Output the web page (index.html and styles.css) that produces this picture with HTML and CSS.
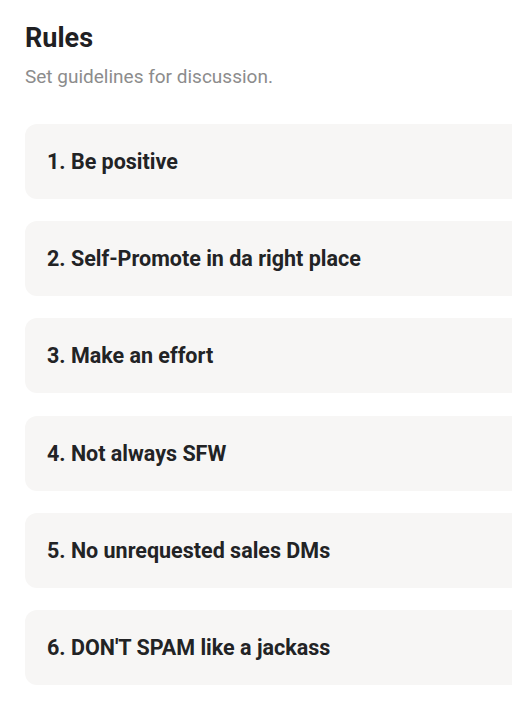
FILE: index.html
```html
<!DOCTYPE html>
<html>
<head>
<meta charset="utf-8">
<link rel="stylesheet" href="styles.css">
</head>
<body>
<div class="page">
  <h1 class="title">Rules</h1>
  <p class="subtitle">Set guidelines for discussion.</p>
  <div class="rules">
    <div class="rule">1. Be positive</div>
    <div class="rule">2. Self-Promote in da right place</div>
    <div class="rule">3. Make an effort</div>
    <div class="rule">4. Not always SFW</div>
    <div class="rule">5. No unrequested sales DMs</div>
    <div class="rule">6. DON'T SPAM like a jackass</div>
  </div>
</div>
</body>
</html>
```
FILE: styles.css
```css
html, body {
  margin: 0;
  padding: 0;
  background: #ffffff;
  overflow: hidden;
}
body {
  font-family: Roboto, "Liberation Sans", sans-serif;
  color: #222325;
}
.page {
  padding: 22px 0 0 25px;
  width: 540px;
}
.title {
  margin: 0;
  font-size: 27px;
  line-height: 32px;
  font-weight: 700;
  color: #1f2023;
}
.subtitle {
  margin: 12px 0 0;
  font-size: 19px;
  line-height: 22px;
  color: #8c8c8c;
}
.rules {
  margin-top: 36px;
  display: flex;
  flex-direction: column;
  gap: 22.2px;
}
.rule {
  background: #f7f6f5;
  border-radius: 12px;
  padding: 24px 22px;
  font-size: 21.5px;
  line-height: 27px;
  font-weight: 700;
  color: #222325;
}
```
